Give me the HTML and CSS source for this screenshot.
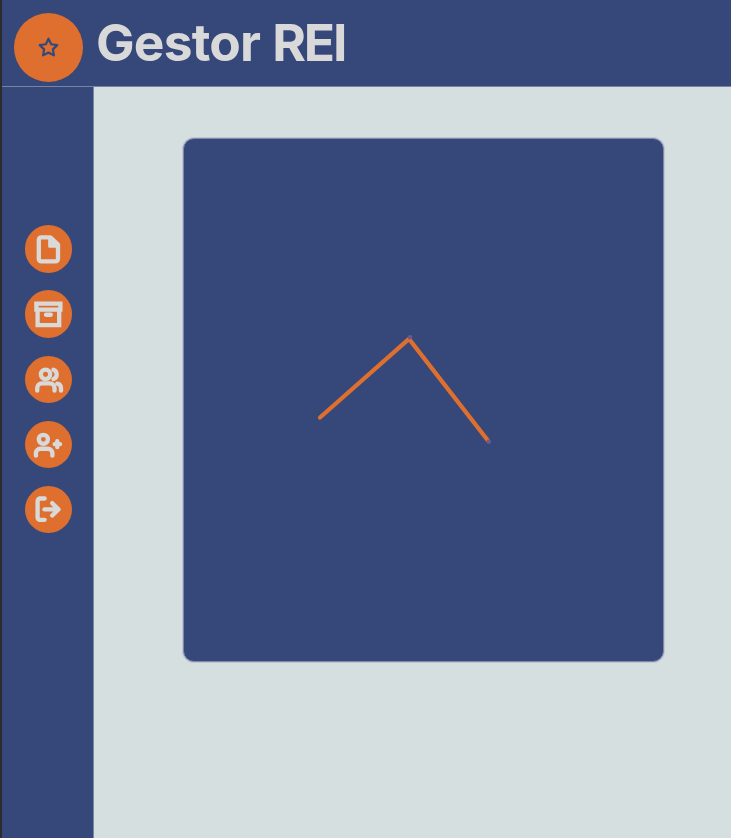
FILE: index.html
```html
<!DOCTYPE html>
<html lang="es">
<head>
<meta charset="utf-8">
<title>Gestor REI</title>
<link rel="stylesheet" href="styles.css">
</head>
<body>
<div class="app">
  <header class="header">
    <div class="logo">
      <svg class="star" viewBox="0 0 24 24"><path d="M12 2l3.09 6.26L22 9.27l-5 4.87 1.18 6.88L12 17.77l-6.18 3.25L7 14.14 2 9.27l6.91-1.01z"/></svg>
    </div>
    <h1 class="title">Gestor <span class="acronym">REI</span></h1>
  </header>
  <div class="body">
    <nav class="sidebar">
      <a class="nav-button"><svg class="icon" viewBox="0 0 24 24"><path d="M13.6 2H6a2 2 0 0 0-2 2v16a2 2 0 0 0 2 2h12a2 2 0 0 0 2-2V8z"/><path class="fold" d="M12.8 2.6v7h6.4z"/></svg></a>
      <a class="nav-button"><svg class="icon icon-sharp" viewBox="0 0 24 24"><path d="M3 8v13h18V8"/><path d="M2 3h20v5H2z"/><path class="round" d="M10 12.3h4"/></svg></a>
      <a class="nav-button"><svg class="icon" viewBox="0 0 24 24"><circle cx="9.6" cy="7.8" r="3.9"/><path d="M2.7 21.4V19a3.7 3.7 0 0 1 3.7-3.7h7a3.7 3.7 0 0 1 3.7 3.7v2.4"/><path d="M16.2 4a4.1 4.1 0 0 1 0 7.7"/><path d="M19.4 15.5c2 .4 3.1 1.7 3.1 3.8v2.1"/></svg></a>
      <a class="nav-button"><svg class="icon" viewBox="0 0 24 24"><circle cx="7.8" cy="7.8" r="3.8"/><path d="M1.6 21.4v-2.1a3.7 3.7 0 0 1 3.7-3.7h6.3a3.7 3.7 0 0 1 3.7 3.7v2.1"/><path d="M17.2 11.8h4.5M19.4 9.3v5"/></svg></a>
      <a class="nav-button"><svg class="icon" viewBox="0 0 24 24"><path d="M8.9 2.9H5a2 2 0 0 0-2 2v13.8a2 2 0 0 0 2 2h3.9M8.7 12h11.6M15.2 6.8l5.2 5.2-5.2 5.1"/></svg></a>
    </nav>
    <main class="content">
      <section class="panel">
        <svg class="drawing" viewBox="0 0 479 522">
          <path class="segment" d="M136 278.5L225 200L303.5 301"/>
          <circle class="node" cx="226" cy="198.3" r="2.3"/>
          <circle class="node" cx="304.7" cy="302.7" r="2.3"/>
        </svg>
      </section>
    </main>
  </div>
</div>
</body>
</html>
```
FILE: styles.css
```css
* {
  box-sizing: border-box;
}

body {
  margin: 0;
  background: #d6dfe0;
  font-family: Inter, "Liberation Sans", sans-serif;
}

.app {
  display: flex;
  flex-direction: column;
  height: 838px;
  border-left: 2px solid #2c2c2e;
  overflow: hidden;
}

.header {
  display: flex;
  flex: none;
  height: 87px;
  padding: 13px 0 0 12px;
  background: #354879;
  border-bottom: 1px solid #7684a5;
}

.logo {
  display: flex;
  align-items: center;
  justify-content: center;
  width: 69px;
  height: 69px;
  border-radius: 50%;
  background: #de6f2e;
}

.star {
  width: 21px;
  height: 21px;
  fill: none;
  stroke: #354879;
  stroke-width: 2.5;
  stroke-linejoin: round;
}

.title {
  margin: -1px 0 0 13px;
  color: #d9d9d9;
  font-size: 51.5px;
  font-weight: 700;
  letter-spacing: -0.8px;
  line-height: 60px;
  white-space: nowrap;
}

.acronym {
  margin-left: 0.5px;
  letter-spacing: -2.2px;
}

.body {
  display: flex;
  flex: 1;
}

.sidebar {
  display: flex;
  flex: none;
  flex-direction: column;
  gap: 17.6px;
  width: 92px;
  padding: 138.4px 0 0 22.6px;
  background: #354879;
  border-right: 1px solid #7684a5;
}

.nav-button {
  display: flex;
  align-items: center;
  justify-content: center;
  width: 47.5px;
  height: 47.5px;
  border-radius: 50%;
  background: #de6f2e;
}

.icon {
  width: 28.8px;
  height: 28.8px;
  overflow: visible;
  fill: none;
  stroke: #d9d9d9;
  stroke-width: 3.6;
  stroke-linecap: round;
  stroke-linejoin: round;
}

.icon-sharp {
  stroke-linejoin: miter;
}

.icon-sharp .round {
  stroke-linecap: round;
}

.icon .fold {
  fill: #d9d9d9;
  stroke-width: 2;
}

.content {
  flex: 1;
  padding: 51px 0 0 89px;
}

.panel {
  width: 481px;
  height: 524px;
  border: 1px solid #8088ab;
  border-radius: 11px;
  background: #354879;
  box-shadow: 0 0 0 1px rgba(150, 155, 180, 0.35);
}

.drawing {
  display: block;
  width: 479px;
  height: 522px;
}

.segment {
  fill: none;
  stroke: #de6f2e;
  stroke-width: 4.3;
  stroke-linecap: round;
}

.node {
  fill: #71588a;
}
```
